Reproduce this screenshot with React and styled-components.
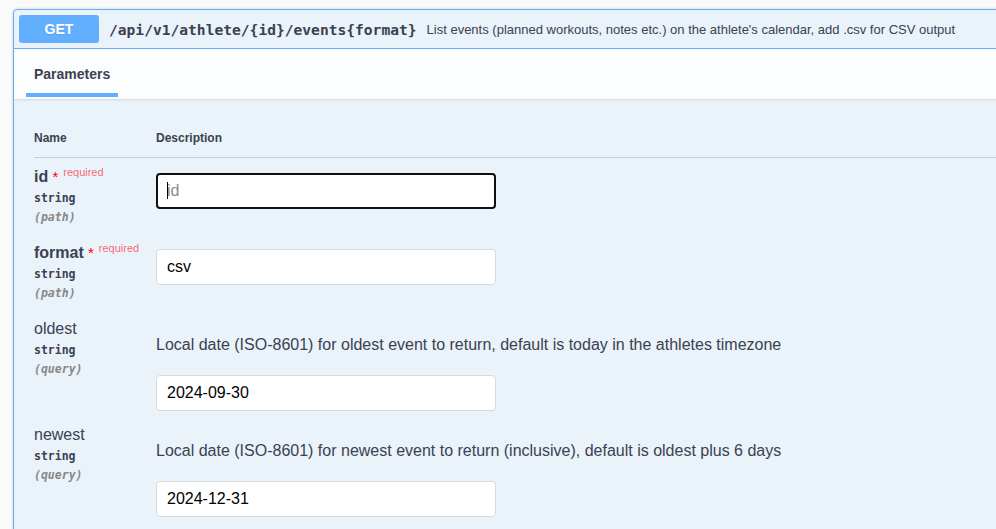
import React from "react";
import styled, { createGlobalStyle, css } from "styled-components";

const Global = createGlobalStyle`
  html, body { margin: 0; padding: 0; overflow: hidden; background: #fafafa; }
  body { font-family: "Liberation Sans", Arial, sans-serif; color: #3b4151; }
`;

const Page = styled.div`
  padding: 9px 0 0 13px;
  width: 1200px;
`;

const Opblock = styled.section`
  width: 1100px;
  border: 1px solid #61affe;
  border-radius: 4px;
  background: rgba(97, 175, 254, 0.1);
  box-shadow: 0 0 3px rgba(0, 0, 0, 0.19);
`;

const Summary = styled.div`
  display: flex;
  align-items: center;
  padding: 5px;
  border-bottom: 1px solid #61affe;
`;

const Method = styled.span`
  min-width: 80px;
  padding: 6px 0;
  line-height: 16px;
  font-size: 14px;
  font-weight: 700;
  text-align: center;
  color: #fff;
  background: #61affe;
  border-radius: 3px;
  text-shadow: 0 1px 0 rgba(0, 0, 0, 0.1);
`;

const Path = styled.span`
  padding: 0 10px;
  font-family: "DejaVu Sans Mono", monospace;
  font-weight: 700;
  font-size: 14.6px;
  color: #3b4151;
`;

const SummaryDesc = styled.span`
  font-size: 13px;
  color: #3b4151;
`;

const SectionHeader = styled.div`
  display: flex;
  height: 50px;
  box-sizing: border-box;
  padding: 0 0 2px 12px;
  background: rgba(255, 255, 255, 0.8);
  box-shadow: 0 1px 2px rgba(0, 0, 0, 0.1);
`;

const Tab = styled.h4`
  margin: 0;
  padding: 17px 8px 11px;
  line-height: 16px;
  font-size: 14px;
  font-weight: 700;
  color: #3b4151;
  border-bottom: 4px solid #61affe;
`;

const TableWrap = styled.div`
  padding: 20px 0 20px 20px;
`;

const Row = styled.div`
  display: grid;
  grid-template-columns: 122px 1fr;
  align-items: start;
  ${(p) =>
    p.$head &&
    css`
      border-bottom: 1px solid rgba(59, 65, 81, 0.2);
    `}
`;

const HeadCell = styled.div`
  padding: 12px 0;
  font-size: 12px;
  line-height: 14px;
  font-weight: 700;
  color: #3b4151;
`;

const NameCell = styled.div`
  padding: 10px 0;
`;

const DescCell = styled.div`
  padding: 10px 0 0 0;
`;

const ParamName = styled.div`
  height: 18px;
  font-size: 16px;
  line-height: 18px;
  font-weight: ${(p) => (p.$required ? 700 : 400)};
  color: #3b4151;
  white-space: nowrap;
`;

const Star = styled.span`
  color: red;
  font-weight: 400;
  font-size: 15px;
  line-height: 0;
`;

const Required = styled.span`
  position: relative;
  top: -6px;
  padding: 5px;
  font-size: 11px;
  line-height: 0;
  font-weight: 400;
  color: rgba(255, 0, 0, 0.6);
`;

const ParamType = styled.div`
  padding: 5px 0;
  font-family: "DejaVu Sans Mono", monospace;
  font-size: 11.5px;
  line-height: 14px;
  font-weight: 700;
  color: #3b4151;
`;

const ParamIn = styled.div`
  font-family: "DejaVu Sans Mono", monospace;
  font-size: 11.5px;
  line-height: 14px;
  font-style: italic;
  font-weight: 700;
  color: #888;
`;

const DescText = styled.p`
  margin: 16px 0;
  font-size: 16px;
  line-height: 18px;
  color: #3b4151;
`;

const InputWrap = styled.div`
  position: relative;
  width: 340px;
  padding: 5px 0;
`;

const TextInput = styled.input`
  display: block;
  box-sizing: border-box;
  width: 340px;
  height: 36px;
  margin: 0;
  padding: ${(p) => (p.$focused ? "7px 9px" : "8px 10px")};
  border: ${(p) => (p.$focused ? "2px solid #101010" : "1px solid #d9d9d9")};
  border-radius: 4px;
  background: #fff;
  font-family: "Liberation Sans", Arial, sans-serif;
  font-size: 16px;
  line-height: 18px;
  color: #000;
  outline: none;
  &::placeholder {
    color: #8a8a8a;
  }
`;

const Caret = styled.span`
  position: absolute;
  left: 11px;
  top: 14px;
  width: 1px;
  height: 17px;
  background: #000;
`;

const params = [
  { name: "id", required: true, type: "string", in: "path", placeholder: "id", focused: true },
  { name: "format", required: true, type: "string", in: "path", value: "csv" },
  {
    name: "oldest",
    type: "string",
    in: "query",
    desc: "Local date (ISO-8601) for oldest event to return, default is today in the athletes timezone",
    value: "2024-09-30",
  },
  {
    name: "newest",
    type: "string",
    in: "query",
    desc: "Local date (ISO-8601) for newest event to return (inclusive), default is oldest plus 6 days",
    value: "2024-12-31",
  },
];

export default function App() {
  return (
    <>
      <Global />
      <Page>
        <Opblock>
          <Summary>
            <Method>GET</Method>
            <Path>/api/v1/athlete/{"{id}"}/events{"{format}"}</Path>
            <SummaryDesc>
              List events (planned workouts, notes etc.) on the athlete's calendar, add .csv for CSV output
            </SummaryDesc>
          </Summary>
          <SectionHeader>
            <Tab>Parameters</Tab>
          </SectionHeader>
          <TableWrap>
            <Row $head>
              <HeadCell>Name</HeadCell>
              <HeadCell>Description</HeadCell>
            </Row>
            {params.map((p) => (
              <Row key={p.name}>
                <NameCell>
                  <ParamName $required={p.required}>
                    {p.name}
                    {p.required && (
                      <>
                        <Star>&nbsp;*</Star>
                        <Required>required</Required>
                      </>
                    )}
                  </ParamName>
                  <ParamType>{p.type}</ParamType>
                  <ParamIn>({p.in})</ParamIn>
                </NameCell>
                <DescCell>
                  {p.desc && <DescText>{p.desc}</DescText>}
                  <InputWrap>
                    <TextInput
                      type="text"
                      $focused={p.focused}
                      placeholder={p.placeholder}
                      defaultValue={p.value}
                      readOnly
                    />
                    {p.focused && <Caret />}
                  </InputWrap>
                </DescCell>
              </Row>
            ))}
          </TableWrap>
        </Opblock>
      </Page>
    </>
  );
}
